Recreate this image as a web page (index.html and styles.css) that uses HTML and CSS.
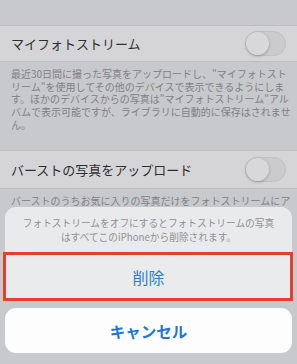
FILE: index.html
```html
<!DOCTYPE html>
<html lang="ja">
<head>
    <meta charset="UTF-8">
    <meta name="viewport" content="width=device-width, initial-scale=1.0">
    <title>写真</title>
    <link rel="stylesheet" href="styles.css">
</head>
<body>
    <div class="settings">
        <div class="spacer"></div>
        <div class="row">
            <span class="label">マイフォトストリーム</span>
            <span class="toggle"><span class="knob"></span></span>
        </div>
        <p class="note">最近30日間に撮った写真をアップロードし、"マイフォトスト<br>リーム"を使用してその他のデバイスで表示できるようにしま<br>す。ほかのデバイスからの写真は"マイフォトストリーム"アル<br>バムで表示可能ですが、ライブラリに自動的に保存はされませ<br>ん。</p>
        <div class="row">
            <span class="label">バーストの写真をアップロード</span>
            <span class="toggle"><span class="knob"></span></span>
        </div>
        <p class="note">バーストのうちお気に入りの写真だけをフォトストリームにア</p>
    </div>

    <div class="sheet">
        <div class="sheet-group">
            <p class="sheet-message">フォトストリームをオフにするとフォトストリームの写真<br>はすべてこのiPhoneから削除されます。</p>
            <button class="sheet-button delete">削除</button>
        </div>
        <button class="sheet-button cancel">キャンセル</button>
    </div>
</body>
</html>
```

FILE: styles.css
```css
body {
    margin: 0;
    width: 297px;
    height: 364px;
    overflow: hidden;
    position: relative;
    background-color: #c8c9cd;
    font-family: "Noto Sans CJK JP", "Noto Sans", sans-serif;
}

.spacer {
    height: 25px;
    border-bottom: 1px solid #bdbec2;
}

.row {
    display: flex;
    align-items: center;
    justify-content: space-between;
    height: 35px;
    padding: 0 11px;
    background-color: #d5d5d8;
    border-bottom: 1px solid #bdbec2;
}

.row + .note + .row {
    border-top: 1px solid #bdbec2;
    height: 37px;
}

.label {
    font-size: 13px;
    color: #2e2e30;
}

.toggle {
    width: 41px;
    height: 25px;
    border-radius: 13px;
    background-color: #cbcbce;
    border: 1px solid #bfc0c3;
    box-sizing: border-box;
    position: relative;
}

.knob {
    position: absolute;
    top: 0;
    left: 0;
    width: 23px;
    height: 23px;
    border-radius: 50%;
    background-color: #d8d8da;
    box-shadow: 0 1px 3px rgba(0, 0, 0, 0.25);
}

.note {
    margin: 0;
    padding: 6px 11px 18px;
    font-size: 10px;
    line-height: 12.7px;
    color: #808084;
    white-space: nowrap;
}

.sheet {
    position: absolute;
    left: 5px;
    top: 207px;
    width: 287px;
    display: flex;
    flex-direction: column;
    gap: 7px;
}

.sheet-group {
    background-color: #e9eaec;
    border-radius: 11px 11px 0 0;
}

.sheet-message {
    margin: 0;
    height: 45px;
    padding-top: 9px;
    box-sizing: border-box;
    text-align: center;
    font-size: 9.7px;
    line-height: 14px;
    color: #909095;
}

.sheet-button {
    display: block;
    width: 100%;
    border: none;
    font-family: inherit;
    color: #2f7dd2;
    cursor: pointer;
}

.delete {
    position: relative;
    height: 49px;
    font-size: 16px;
    background-color: #eaebed;
}

.delete::after {
    content: "";
    position: absolute;
    left: -2px;
    right: -1px;
    top: 0;
    bottom: 0;
    border: 3px solid #e5402b;
}

.cancel {
    height: 45px;
    font-size: 15.5px;
    font-weight: bold;
    background-color: #fdfdfd;
    border-radius: 11px;
    color: #2277d6;
}
```
